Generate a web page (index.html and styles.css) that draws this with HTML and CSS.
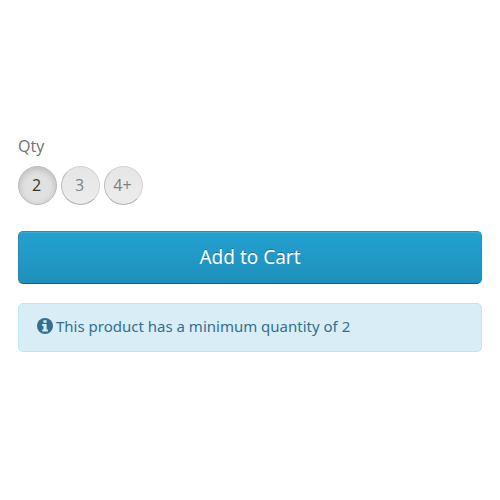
FILE: index.html
```html
<!DOCTYPE html>
<html lang="en">
<head>
  <meta charset="utf-8">
  <meta name="viewport" content="width=device-width, initial-scale=1">
  <title>Add to Cart</title>
  <link rel="stylesheet" href="styles.css">
</head>
<body>
  <main class="product">
    <form class="product-form">
      <div class="qty" role="group" aria-labelledby="qty-label">
        <span class="qty-label" id="qty-label">Qty</span>
        <div class="qty-options">
          <button class="qty-option is-active" type="button" aria-pressed="true">2</button>
          <button class="qty-option" type="button" aria-pressed="false">3</button>
          <button class="qty-option" type="button" aria-pressed="false">4+</button>
        </div>
      </div>
      <button class="add-to-cart" type="submit">Add to Cart</button>
      <div class="alert">
        <svg class="alert-icon" viewBox="0 0 16 16" aria-hidden="true">
          <circle cx="8" cy="8" r="8" fill="currentColor"/>
          <path fill="#d9edf7" d="M6.4 2.2h3.2v2.6H6.4zM5.2 6h4.4v5.4h1.3v2H5.2v-2h1.3V8H5.2z"/>
        </svg>
        <span>This product has a minimum quantity of 2</span>
      </div>
    </form>
  </main>
</body>
</html>
```
FILE: styles.css
```css
* {
  box-sizing: border-box;
}

body {
  margin: 0;
  background: #fff;
  color: #707070;
  font: 16px/24px "Noto Sans", "Open Sans", sans-serif;
}

.product {
  min-height: 100vh;
  padding: 0 18px;
  display: flex;
  flex-direction: column;
  justify-content: center;
}

.product-form {
  display: flex;
  flex-direction: column;
  gap: 19px;
  padding-bottom: 15px;
}

.qty {
  display: flex;
  flex-direction: column;
  gap: 8px;
  padding-bottom: 7px;
  font-family: "Open Sans", "Noto Sans", sans-serif;
}

.qty-options {
  display: flex;
  gap: 4px;
}

.qty-option {
  width: 39px;
  height: 39px;
  padding: 0 2px 0 0;
  border: 1px solid #d4d4d4;
  border-left-color: #bbb;
  border-bottom-color: #b0b0b0;
  border-radius: 50%;
  background: linear-gradient(#e6e6e6, #ececec);
  color: #808080;
  font: inherit;
}

.qty-option.is-active {
  border-color: #b8b8b8;
  background: #e1e1e1;
  box-shadow: inset 0 2px 6px rgba(0, 0, 0, 0.18);
  color: #333;
}

.add-to-cart {
  width: 100%;
  padding: 11px 16px;
  border: 1px solid #1f90bb;
  border-bottom-color: #18607e;
  border-radius: 5px;
  background: linear-gradient(#23a1d1, #1f90bb);
  box-shadow: inset 0 1px 0 rgba(255, 255, 255, 0.1);
  color: #fff;
  font: inherit;
  font-size: 19px;
  line-height: 29px;
  text-shadow: 0 -1px 0 rgba(0, 0, 0, 0.25);
}

.alert {
  display: flex;
  align-items: center;
  gap: 3px;
  padding: 10px 18px 12px;
  border: 1px solid #bce8f1;
  border-radius: 5px;
  background: #d9edf7;
  color: #31708f;
  font-size: 15px;
  line-height: 25px;
}

.alert-icon {
  flex: none;
  width: 16px;
  height: 16px;
}
```
